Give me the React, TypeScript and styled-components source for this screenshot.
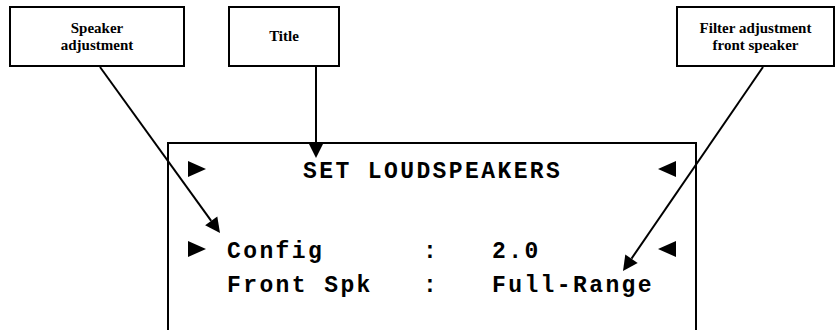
import React from 'react'
import styled, { createGlobalStyle } from 'styled-components'

const GlobalStyle = createGlobalStyle`
  html, body {
    margin: 0;
    padding: 0;
    background: #fff;
  }
`

type Pt = [number, number]

const callouts = [
  { text: ['Speaker', 'adjustment'], width: 176, offset: 9 },
  { text: ['Title'], width: 112, offset: 43 },
  { text: ['Filter adjustment', 'front speaker'], width: 159, offset: 336 },
]

const arrows: { from: Pt; to: Pt }[] = [
  { from: [100, 67], to: [220, 233] },
  { from: [316, 67], to: [316, 158] },
  { from: [763, 67], to: [623, 271] },
]

const rows = [
  { left: true, label: 'Config', value: '2.0', right: true },
  { left: false, label: 'Front Spk', value: 'Full-Range', right: false },
]

const Arrow = ({ from, to }: { from: Pt; to: Pt }) => {
  const dx = to[0] - from[0]
  const dy = to[1] - from[1]
  const len = Math.hypot(dx, dy)
  const ux = dx / len
  const uy = dy / len
  const head = 15
  const half = 7.5
  const bx = to[0] - ux * head
  const by = to[1] - uy * head
  const px = -uy * half
  const py = ux * half
  return (
    <g>
      <line x1={from[0]} y1={from[1]} x2={bx} y2={by} stroke="#000" strokeWidth={2} />
      <polygon
        points={`${bx + px},${by + py} ${bx - px},${by - py} ${to[0]},${to[1]}`}
        fill="#000"
      />
    </g>
  )
}

const App = () => {
  return (
    <>
      <GlobalStyle />
      <Canvas>
        <CalloutRow>
          {callouts.map((c) => (
            <Callout key={c.text[0]} $width={c.width} $offset={c.offset}>
              {c.text.map((line) => (
                <span key={line}>{line}</span>
              ))}
            </Callout>
          ))}
        </CalloutRow>

        <Screen>
          <ScreenRow $title>
            <Marker $dir="right" />
            <TitleText>SET LOUDSPEAKERS</TitleText>
            <Marker $dir="left" />
          </ScreenRow>
          {rows.map((r) => (
            <ScreenRow key={r.label}>
              {r.left ? <Marker $dir="right" /> : <span />}
              <Cell>{r.label}</Cell>
              <Cell>:</Cell>
              <Cell>{r.value}</Cell>
              {r.right ? <Marker $dir="left" /> : <span />}
            </ScreenRow>
          ))}
        </Screen>

        <Overlay width={839} height={330} viewBox="0 0 839 330">
          {arrows.map((a, i) => (
            <Arrow key={i} from={a.from} to={a.to} />
          ))}
        </Overlay>
      </Canvas>
    </>
  )
}

export default App

const Canvas = styled.div`
  position: relative;
  width: 839px;
  height: 330px;
  overflow: hidden;
  background: #fff;
`

const CalloutRow = styled.div`
  display: flex;
  padding-top: 6px;
`

const Callout = styled.div<{ $width: number; $offset: number }>`
  box-sizing: border-box;
  width: ${(p) => p.$width}px;
  height: 61px;
  margin-left: ${(p) => p.$offset}px;
  border: 2px solid #000;
  display: flex;
  flex-direction: column;
  align-items: center;
  justify-content: center;
  font-family: 'Liberation Serif', 'Times New Roman', serif;
  font-weight: bold;
  font-size: 15px;
  line-height: 17px;
  color: #000;
  text-align: center;
`

const Screen = styled.div`
  box-sizing: border-box;
  width: 530px;
  height: 220px;
  margin: 75px 0 0 167px;
  border: 2px solid #000;
  border-bottom: none;
  padding: 11px 0 0 19px;
  font-family: 'Liberation Mono', 'Courier New', monospace;
  font-weight: bold;
  font-size: 23px;
  letter-spacing: 2.4px;
  line-height: 34px;
  color: #000;
`

const ScreenRow = styled.div<{ $title?: boolean }>`
  display: grid;
  grid-template-columns: 39px ${(p) => (p.$title ? '431px' : '196px 69px 166px')} 18px;
  margin-bottom: ${(p) => (p.$title ? '46px' : '0')};
`

const Cell = styled.span`
  white-space: pre;
`

const TitleText = styled.span`
  white-space: pre;
  padding-left: 76px;
`

const Marker = styled.span<{ $dir: 'left' | 'right' }>`
  align-self: start;
  width: 18px;
  height: 16px;
  margin-top: 6px;
  background: #000;
  clip-path: ${(p) =>
    p.$dir === 'right'
      ? 'polygon(0 0, 100% 50%, 0 100%)'
      : 'polygon(100% 0, 0 50%, 100% 100%)'};
`

const Overlay = styled.svg`
  position: absolute;
  left: 0;
  top: 0;
  pointer-events: none;
`
